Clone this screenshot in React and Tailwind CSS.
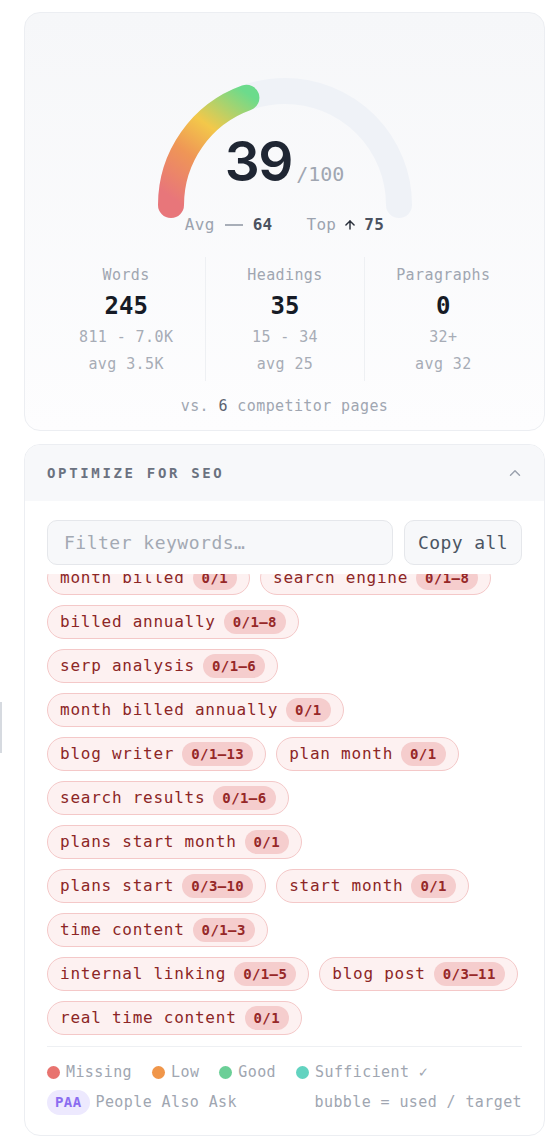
import { useEffect, useRef } from 'react'
import { ChevronUp, ArrowUp } from 'lucide-react'

const mono = "font-['DejaVu_Sans_Mono','Liberation_Mono',monospace]"

const stats = [
  { label: 'Words', value: '245', range: '811 - 7.0K', avg: 'avg 3.5K' },
  { label: 'Headings', value: '35', range: '15 - 34', avg: 'avg 25' },
  { label: 'Paragraphs', value: '0', range: '32+', avg: 'avg 32' },
]

const keywords = [
  ['month billed', '0/1'],
  ['search engine', '0/1–8'],
  ['billed annually', '0/1–8'],
  ['serp analysis', '0/1–6'],
  ['month billed annually', '0/1'],
  ['blog writer', '0/1–13'],
  ['plan month', '0/1'],
  ['search results', '0/1–6'],
  ['plans start month', '0/1'],
  ['plans start', '0/3–10'],
  ['start month', '0/1'],
  ['time content', '0/1–3'],
  ['internal linking', '0/1–5'],
  ['blog post', '0/3–11'],
  ['real time content', '0/1'],
]

const legend = [
  { label: 'Missing', dot: 'bg-[#e8736f]' },
  { label: 'Low', dot: 'bg-[#f0964a]' },
  { label: 'Good', dot: 'bg-[#6bcf97]' },
  { label: 'Sufficient ✓', dot: 'bg-[#62d3c0]' },
]

function Gauge() {
  return (
    <div className="relative mx-auto w-[260px] h-[140px]">
      <svg width="260" height="140" viewBox="0 0 260 140" className="overflow-visible">
        <defs>
          <linearGradient id="arcGrad" gradientUnits="userSpaceOnUse" x1="20" y1="125" x2="95" y2="20">
            <stop offset="0" stopColor="#e8767a" />
            <stop offset="0.35" stopColor="#ef9656" />
            <stop offset="0.62" stopColor="#f3c84a" />
            <stop offset="1" stopColor="#6cdb8c" />
          </linearGradient>
        </defs>
        <path d="M16 130 A114 114 0 0 1 244 130" fill="none" stroke="#eff2f7" strokeWidth="26" strokeLinecap="round" />
        <path d="M16 130 A114 114 0 0 1 91.4 22.7" fill="none" stroke="url(#arcGrad)" strokeWidth="26" strokeLinecap="round" />
      </svg>
      <div className="absolute inset-x-0 top-[59px] flex justify-center items-baseline">
        <span className="font-['Inter',sans-serif] text-[55px] leading-none font-semibold tracking-tight text-[#1f2633]">39</span>
        <span className={`${mono} ml-[4px] text-[20px] text-[#a0a6b1]`}>/100</span>
      </div>
    </div>
  )
}

export default function App() {
  const listRef = useRef(null)

  useEffect(() => {
    if (listRef.current) listRef.current.scrollTop = listRef.current.scrollHeight
  }, [])

  return (
    <div className={`relative min-h-[1144px] bg-white pl-6 pr-[13px] pt-3 ${mono}`}>
      <div className="absolute left-0 top-[702px] w-[2px] h-[51px] bg-[#d6dae0]" />

      <div className="rounded-2xl border border-[#eceef2] bg-linear-to-b from-[#f6f7f9] to-[#fdfdfe] pt-[62px] pb-[14px] px-[22px]">
        <Gauge />
        <div className="flex justify-center items-center gap-[34px] h-5 text-[16px] tracking-[0.3px] text-[#9ca3af]">
          <div className="flex items-center">
            <span>Avg</span>
            <span className="inline-block w-[18px] h-[1.5px] bg-[#a8aeb8] mx-[10px]" />
            <span className="font-bold text-[#4b5260]">64</span>
          </div>
          <div className="flex items-center">
            <span>Top</span>
            <ArrowUp size={14} strokeWidth={2.5} className="text-[#2b313c] mx-[7px]" />
            <span className="font-bold text-[#4b5260]">75</span>
          </div>
        </div>

        <div className="mt-[22px] grid grid-cols-3">
          {stats.map((s, i) => (
            <div
              key={s.label}
              className={`flex flex-col items-center pt-2 pb-[6px] tracking-[0.4px] ${i > 0 ? 'border-l border-[#eef0f3]' : ''}`}
            >
              <div className="text-[15px] leading-5 text-[#a0a6b1]">{s.label}</div>
              <div className="mt-[6px] text-[24px] leading-[30px] font-bold text-[#161b26] tracking-normal">{s.value}</div>
              <div className="mt-[5px] text-[15px] leading-[22px] text-[#a7acb6]">{s.range}</div>
              <div className="mt-[5px] text-[15px] leading-[22px] text-[#a7acb6]">{s.avg}</div>
            </div>
          ))}
        </div>

        <div className="mt-[15px] text-center text-[15px] leading-5 tracking-[0.4px] text-[#a0a6b1]">
          vs. <span className="text-[#5b6270]">6</span> competitor pages
        </div>
      </div>

      <div className="mt-[13px] rounded-2xl border border-[#eceef2] bg-white overflow-hidden">
        <div className="flex items-center justify-between bg-[#f7f8fa] h-[56px] px-[22px]">
          <span className="text-[14px] font-bold tracking-[0.19em] text-[#6b7280]">OPTIMIZE FOR SEO</span>
          <ChevronUp size={18} strokeWidth={2} className="text-[#9ca3af] mr-[-2px]" />
        </div>

        <div className="px-[22px] pt-[19px] pb-5">
          <div className="flex gap-[11px]">
            <div className="flex-1 h-[45px] rounded-[10px] border border-[#e5e7eb] bg-[#f7f8fa] px-4 flex items-center text-[18px] tracking-[0.5px] text-[#a3a9b3]">
              Filter keywords…
            </div>
            <button className="h-[45px] rounded-[10px] border border-[#e5e7eb] bg-[#f7f8fa] px-[13px] text-[18px] tracking-[0.4px] text-[#4b5563]">
              Copy all
            </button>
          </div>

          <div
            ref={listRef}
            className="mt-[9px] h-[463px] overflow-y-auto [scrollbar-width:none]"
          >
            <div className="flex flex-wrap gap-[10px] py-[2px]">
              {keywords.map(([k, b]) => (
                <div
                  key={k}
                  className="flex items-center h-[34px] rounded-full border border-[#f4c8c8] bg-[#fdf1f1] px-3 text-[16px] tracking-[0.75px] text-[#8c2626]"
                >
                  <span>{k}</span>
                  <span className="ml-[8px] h-6 flex items-center rounded-full bg-[#f5cdcd] px-[9px] text-[14px] font-bold tracking-[0.4px] text-[#962828]">
                    {b}
                  </span>
                </div>
              ))}
            </div>
          </div>

          <div className="mt-[9px] border-t border-[#eef0f3] pt-[15px] text-[15px] tracking-[0.4px] text-[#a0a6b1]">
            <div className="flex items-center gap-5 h-5">
              {legend.map(l => (
                <div key={l.label} className="flex items-center gap-[6px]">
                  <span className={`w-[13px] h-[13px] rounded-full ${l.dot}`} />
                  <span>{l.label}</span>
                </div>
              ))}
            </div>
            <div className="mt-2 flex items-center justify-between">
              <div className="flex items-center gap-[6px]">
                <span className="h-[25px] px-2 rounded-full bg-[#ede9fe] text-[#8b6cf0] font-bold text-[14px] flex items-center">PAA</span>
                <span>People Also Ask</span>
              </div>
              <span>bubble = used / target</span>
            </div>
          </div>
        </div>
      </div>
    </div>
  )
}
